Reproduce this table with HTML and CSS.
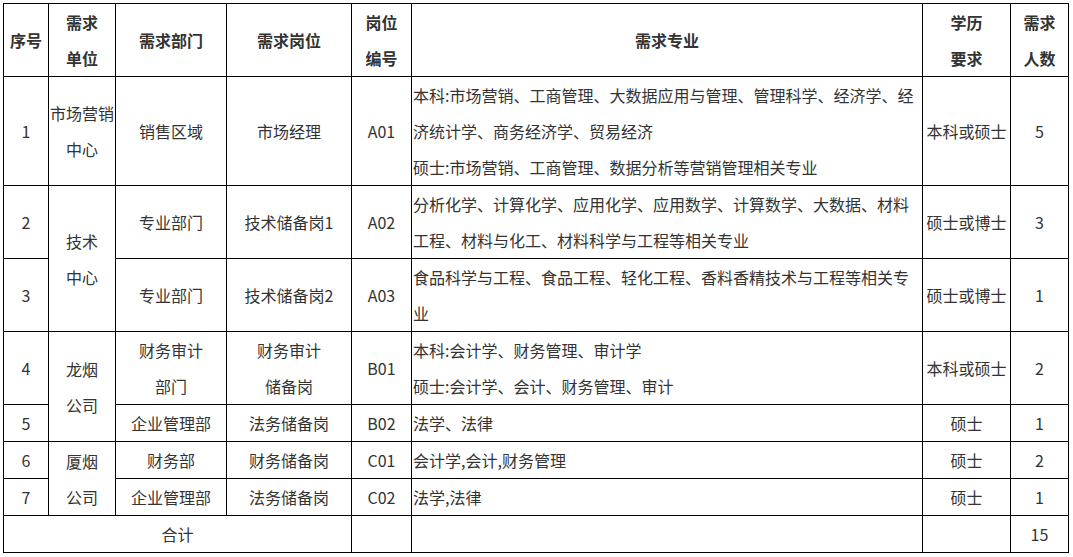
FILE: index.html
```html
<!DOCTYPE html>
<html lang="zh-CN">
<head>
<meta charset="utf-8">
<title>需求岗位</title>
<link rel="stylesheet" href="styles.css">
</head>
<body>
<div class="page">
<table class="jobs">
  <colgroup>
    <col class="c-no">
    <col class="c-unit">
    <col class="c-dept">
    <col class="c-post">
    <col class="c-code">
    <col class="c-major">
    <col class="c-edu">
    <col class="c-num">
  </colgroup>
  <thead>
    <tr class="r2">
      <th>序号</th>
      <th>需求<br>单位</th>
      <th>需求部门</th>
      <th>需求岗位</th>
      <th>岗位<br>编号</th>
      <th>需求专业</th>
      <th>学历<br>要求</th>
      <th>需求<br>人数</th>
    </tr>
  </thead>
  <tbody>
    <tr class="r3">
      <td>1</td>
      <td>市场营销中心</td>
      <td>销售区域</td>
      <td>市场经理</td>
      <td>A01</td>
      <td class="major">本科:市场营销、工商管理、大数据应用与管理、管理科学、经济学、经济统计学、商务经济学、贸易经济<br>硕士:市场营销、工商管理、数据分析等营销管理相关专业</td>
      <td>本科或硕士</td>
      <td>5</td>
    </tr>
    <tr class="r2">
      <td>2</td>
      <td rowspan="2">技术<br>中心</td>
      <td>专业部门</td>
      <td>技术储备岗1</td>
      <td>A02</td>
      <td class="major">分析化学、计算化学、应用化学、应用数学、计算数学、大数据、材料工程、材料与化工、材料科学与工程等相关专业</td>
      <td>硕士或博士</td>
      <td>3</td>
    </tr>
    <tr class="r2">
      <td>3</td>
      <td>专业部门</td>
      <td>技术储备岗2</td>
      <td>A03</td>
      <td class="major">食品科学与工程、食品工程、轻化工程、香料香精技术与工程等相关专业</td>
      <td>硕士或博士</td>
      <td>1</td>
    </tr>
    <tr class="r2">
      <td>4</td>
      <td rowspan="2">龙烟<br>公司</td>
      <td>财务审计<br>部门</td>
      <td>财务审计<br>储备岗</td>
      <td>B01</td>
      <td class="major">本科:会计学、财务管理、审计学<br>硕士:会计学、会计、财务管理、审计</td>
      <td>本科或硕士</td>
      <td>2</td>
    </tr>
    <tr class="r1">
      <td>5</td>
      <td>企业管理部</td>
      <td>法务储备岗</td>
      <td>B02</td>
      <td class="major">法学、法律</td>
      <td>硕士</td>
      <td>1</td>
    </tr>
    <tr class="r1">
      <td>6</td>
      <td rowspan="2">厦烟<br>公司</td>
      <td>财务部</td>
      <td>财务储备岗</td>
      <td>C01</td>
      <td class="major">会计学,会计,财务管理</td>
      <td>硕士</td>
      <td>2</td>
    </tr>
    <tr class="r1">
      <td>7</td>
      <td>企业管理部</td>
      <td>法务储备岗</td>
      <td>C02</td>
      <td class="major">法学,法律</td>
      <td>硕士</td>
      <td>1</td>
    </tr>
    <tr class="r1">
      <td colspan="4">合计</td>
      <td></td>
      <td></td>
      <td></td>
      <td>15</td>
    </tr>
  </tbody>
</table>
</div>
</body>
</html>
```

FILE: styles.css
```css
html, body {
  margin: 0;
  padding: 0;
  background: #ffffff;
}

.page {
  padding: 3px 0 0 3px;
}

.jobs {
  border-collapse: collapse;
  table-layout: fixed;
  width: 1065px;
  font-family: "Microsoft YaHei", "Noto Sans CJK SC", sans-serif;
  font-size: 16px;
  line-height: 36px;
  color: #333333;
}

.c-no { width: 45px; }
.c-unit { width: 67px; }
.c-dept { width: 111px; }
.c-post { width: 125px; }
.c-code { width: 60px; }
.c-major { width: 511px; }
.c-edu { width: 88px; }
.c-num { width: 58px; }

.jobs th,
.jobs td {
  border: 1px solid #000000;
  padding: 0;
  text-align: center;
  vertical-align: middle;
  word-break: break-all;
}

.jobs th {
  font-weight: bold;
}

.jobs td.major {
  text-align: left;
  padding-left: 1px;
}

.r1 { height: 37px; }
.r2 { height: 73px; }
.r3 { height: 109px; }
```
